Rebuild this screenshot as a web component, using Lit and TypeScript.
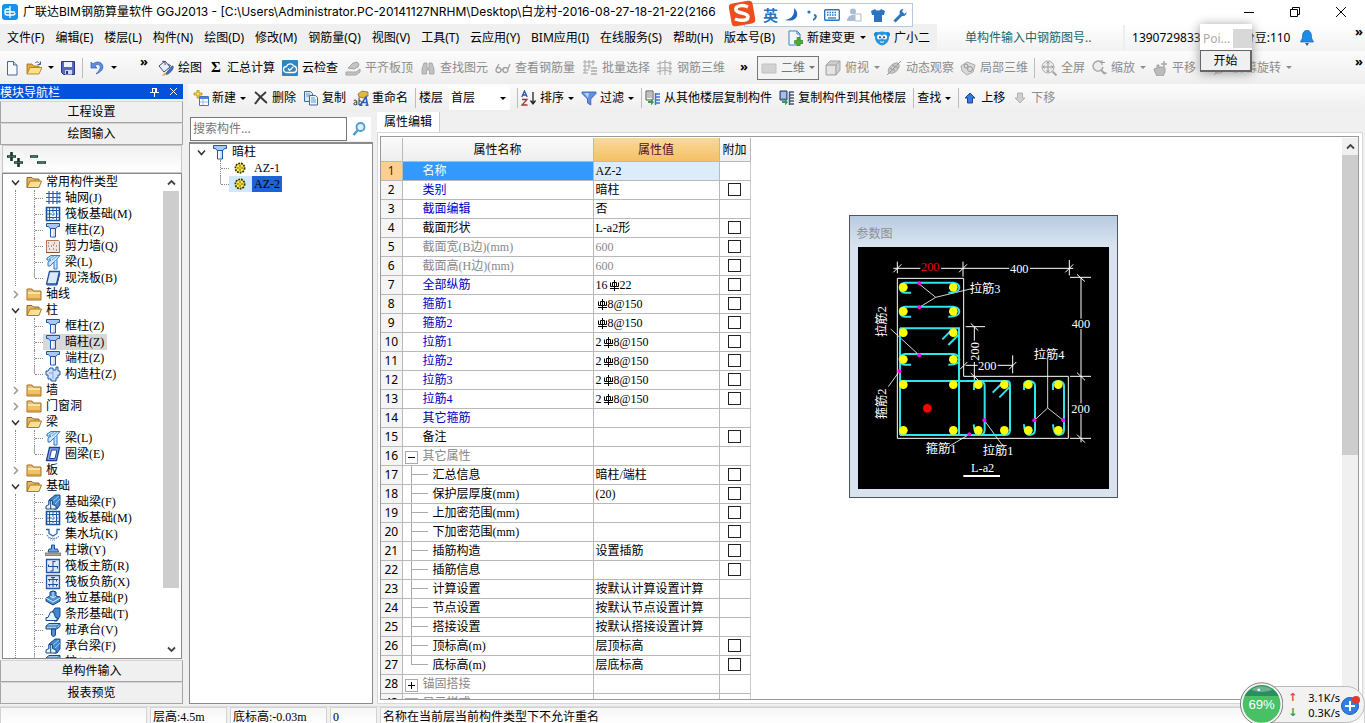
import { LitElement, html, svg, css, nothing, type TemplateResult } from "lit";
import { customElement, state } from "lit/decorators.js";
import { classMap } from "lit/directives/class-map.js";

const glyphs: Record<string, TemplateResult> = {
  app: svg`<rect width="16" height="16" rx="3" fill="#1592ea"/><path d="M8 2v12M8 5H5a2 2 0 0 0-2 2v2a2 2 0 0 0 2 2h3M3 8h10M8 11h3a2 2 0 0 0 2-2" stroke="#fff" stroke-width="1.3" fill="none"/>`,
  newfile: svg`<path d="M3.500 1.500h6l3.500 3.500v10h-9.500z" fill="#f7faff" stroke="#4c678f"/><path d="M9.500 1.500V5H13" fill="#cfdcf0" stroke="#4c678f"/>`,
  open: svg`<path d="M1 14V4h5l1.500 2H13v2" fill="#e8a93c" stroke="#9a6b17" stroke-width=".8"/><path d="M1 14 4 7.500h12L13 14z" fill="#ffe08a" stroke="#a87717" stroke-width=".8"/><path d="M9 3c2-2 4-1 5 1M14.500 1.500V4.500H11.500" fill="none" stroke="#4a5f88"/>`,
  save: svg`<path d="M1.500 1.500h13v13h-11l-2-2z" fill="#5567c4" stroke="#2c3784"/><path d="M4 2h8v5H4z" fill="#eef1fb"/><path d="M5 10h7v4.500H5z" fill="#d4d8ea"/><path d="M6 11h2v3H6z" fill="#2c3784"/>`,
  undo: svg`<path d="M2 2v6h6L5.800 5.800C9 3 13 5.500 10.500 9.500 9.800 11 8.500 12.500 7 14c5-2 8-5 6.500-9C12 1.500 7.500 1 4 4z" fill="#5b8fe8" stroke="#2b58b5" stroke-width=".7"/>`,
  bucket: svg`<path d="M1 6 7 1l5 6-6 5z" fill="#e9eef8" stroke="#3c4c70"/><path d="M4 2c1-2 4 0 3 3M10 4l3 2" fill="none" stroke="#3c4c70"/><path d="M15 6c1 3-2 6-5 8-2 1-3 0-1-2l5-6z" fill="#3f6fc4" stroke="#27427e" stroke-width=".6"/><path d="M6 13c2-1 3 1 1 2.500L4 16z" fill="#e3b23e"/>`,
  cloud: svg`<rect width="16" height="16" rx="1" fill="#2f86c1"/><path d="M4.500 12.500a3 3 0 0 1 0-6A4 4 0 0 1 11.800 6 3.300 3.300 0 0 1 12 12.500z" fill="none" stroke="#fff" stroke-width="1.300"/><path d="m6 8.500 1.700 1.800L11 7" stroke="#fff" fill="none" stroke-width="1.200"/>`,
  slab: svg`<path d="M1 12h10l4-3v3l-4 3H1zM3 8l5-5 4-1 2 2-1 3-4 2z" fill="#c4c4c4" stroke="#a4a4a4"/>`,
  binoc: svg`<path d="M2 9 4 3h3v5h2V3h3l2 6v5H9.500v-4h-3v4H2z" fill="#c2c2c2" stroke="#9e9e9e" stroke-width=".8"/>`,
  glasses: svg`<path d="M6 10a2.500 2.500 0 1 1-5 0 2.500 2.500 0 0 1 5 0zM13 10a2.500 2.500 0 1 1-5 0 2.500 2.500 0 0 1 5 0zM6 9.500h2M1 9l3-5M13 9l2-5" fill="none" stroke="#a2a2a2" stroke-width="1.300"/>`,
  batch: svg`<path d="M1 2h12M1 6h8M1 10h6M3 0v13M7 0v9M11 0v5M1 13h5" stroke="#a8a8a8" fill="none"/><path d="M9 7h6v2H9zM9 10h6v2H9zM9 13h6v2H9z" fill="#bdbdbd"/>`,
  rebar3d: svg`<path d="M3 1v14M8 0v15M13 1v14M0 4l8-2 7 2M0 12l8-2 7 2M0 8h15" stroke="#a8a8a8" fill="none"/>`,
  flat: svg`<path d="M1 4h14v9H1z" fill="#d2d2d2" stroke="#c0c0c0"/>`,
  cube: svg`<path d="M1 5l4-4h10v9l-4 5H1z" fill="#cfcfcf" stroke="#a5a5a5"/><path d="M1 5h10v10M11 5l4-4" fill="none" stroke="#a5a5a5"/><path d="M2 6h8v8H2z" fill="#e4e4e4"/>`,
  orbit: svg`<path d="M3 13c-3-4 4-11 9-10 4 4-3 12-9 10z" fill="#c9c9c9" stroke="#a3a3a3"/><path d="M1 15 15 1M6 5l6 3M4 8l5 3" stroke="#989898"/>`,
  local3d: svg`<path d="M1 6 7 2l8 3-2 7-6 3-5-4z" fill="#dadada" stroke="#aaa"/><circle cx="6" cy="6" r="2" fill="none" stroke="#999"/><circle cx="10" cy="9" r="2.500" fill="none" stroke="#999"/>`,
  full: svg`<circle cx="7" cy="7" r="6" fill="#ececec" stroke="#a6a6a6"/><path d="M7 2v10M2 7h10M5.500 3.500 7 2l1.500 1.500M5.500 10.500 7 12l1.500-1.500M3.500 5.500 2 7l1.500 1.500M10.500 5.500 12 7l-1.500 1.500" fill="none" stroke="#999"/><path d="m11.500 11.500 4 4" stroke="#a6a6a6" stroke-width="2"/>`,
  zoom: svg`<path d="M10 2a5 5 0 1 0 2 5" fill="#ececec" stroke="#a6a6a6" stroke-width="1.400"/><path d="m10 10 4 4" stroke="#a6a6a6" stroke-width="2"/><path d="M11 0v5M9 2.500h5M12 13h4" stroke="#999"/>`,
  hand: svg`<path d="M2 10c0-2 2-2 3-1V5h2v3l1-1h2l3 1v4l-2 4H5z" fill="#bcbcbc" stroke="#a0a0a0"/><path d="M12 1v6M9 4h6" stroke="#a8a8a8" stroke-width="1.500"/>`,
  create: svg`<path d="M6.500 6.500h9v9h-9z" fill="#fff" stroke="#4576bf"/><path d="M7 7h8v2H7z" fill="#4d86d8"/><path d="M7 12h8M10 9v6" stroke="#9db9e4"/><path d="M4 0h2v3h3v2H6v3H4V5H1V3h3z" fill="#ffdf4a" stroke="#a07d13" stroke-width=".7"/>`,
  del: svg`<path d="M2 2c4 3 8 8 12 11M13 2C9 5 5 9 2 14" stroke="#3a3a3a" stroke-width="2" fill="none"/>`,
  copy: svg`<path d="M1.500 1.500h6l2 2v8h-8z" fill="#dbe8fc" stroke="#41699f"/><path d="M6.500 5.500h6l2 2v7.500h-8z" fill="#eef4ff" stroke="#41699f"/><path d="M3 4h4M3 6h3M8 8h4M8 10h5M8 12h5" stroke="#6b96d8"/>`,
  rename: svg`<path d="M5 4 9 1l6 1v4l-4 2-5-1z" fill="#e2b93f" stroke="#7a6220" stroke-width=".7"/><path d="M.8 10.500c2-1 3 0 3 1.200v3.300M3.800 12C1.500 12 .8 13 .8 14c.3 1.300 2.300 1.200 3 0M6 7.500V15M6 11c3-1.500 3.500 4 0 3.800" fill="none" stroke="#333"/><path d="M7.500 15 13 7l1.500 8M10 12.500h4M6.500 15.200h3M12.500 15.200h3" fill="none" stroke="#2a5cc0" stroke-width="1.500"/>`,
  sort: svg`<path d="M.8 7 3.500 1 6.200 7M1.800 5h3.500" fill="none" stroke="#2d50b4" stroke-width="1.300"/><path d="M1 9.500h5L1 15h5.500" fill="none" stroke="#a33" stroke-width="1.300"/><path d="M12 2v12M9.500 10.500 12 14l2.500-3.500" fill="none" stroke="#222" stroke-width="1.300"/>`,
  filter: svg`<path d="M1 2h14v1.500L9.800 9v6L6.500 13V9L1 3.500z" fill="#5f92e4" stroke="#2c57a8" stroke-width=".8"/><path d="M3 3h5l-1 5z" fill="#b6d0fa"/>`,
  fromfloor: svg`<path d="M1 1h7v9H1z" fill="#f4f4f4" stroke="#555"/><path d="M2 3h5M2 5h5M2 7h5" stroke="#888"/><path d="M10 4h5M10 7h5M10 10h5M10 13h5M10.500 3v12" stroke="#3f74cf" stroke-width="1.500"/><path d="M3 11v2h3v2.500l3-3.500-3-3v2z" fill="#35a043"/>`,
  tofloor: svg`<path d="M1 1h7v9H1z" fill="#6e94d8" stroke="#345"/><path d="M2 3h5M2 5h5M2 7h5" stroke="#dfe9fb"/><path d="M10 2h5M10 5h5M10 8h5M10 11h5M10 14h5M10.500 2v13" stroke="#44597d" stroke-width="1.500"/><path d="M3 11v2h3v2.500l3-3.500-3-3v2z" fill="#35a043"/>`,
  up: svg`<path d="M8 3 13 8h-2.500v5h-5V8H3z" fill="#3976e0" stroke="#1d468f"/>`,
  down: svg`<path d="M8 13 13 8h-2.500V3h-5v5H3z" fill="#cfcfcf" stroke="#b2b2b2"/>`,
  change: svg`<path d="M2 1h8l3 3v11H2z" fill="#f3f8ff" stroke="#3b86c7"/><path d="M10 1v3h3" fill="none" stroke="#3b86c7"/><path d="M10 7.500h3v3h3v3h-3V16h-3v-2.500H7.500v-3H10z" fill="#4caf2e" stroke="#2b7b18" stroke-width=".6"/>`,
  robot: svg`<circle cx="2.500" cy="4.500" r="2.500" fill="#1a7ec8"/><circle cx="13.500" cy="4.500" r="2.500" fill="#1a7ec8"/><path d="M8 1.500c5 0 7 3 7 6 0 4-3 7-7 8-4-1-7-4-7-8 0-3 2-6 7-6z" fill="#2596dd"/><circle cx="5.500" cy="7" r="2.500" fill="#fff"/><circle cx="10.500" cy="7" r="2.500" fill="#fff"/><circle cx="6" cy="7.300" r="1.100" fill="#124d83"/><circle cx="10" cy="7.300" r="1.100" fill="#124d83"/><path d="M6 11.500c1 1 3 1 4 0" stroke="#fff" fill="none"/>`,
  bell: svg`<path d="M8 0c4 1 4.500 4 4.500 7 0 2 1.500 3 2 5h-13c.5-2 2-3 2-5 0-3 .5-6 4.500-7z" fill="#1c8bea" stroke="#1669b8" stroke-width=".7"/><path d="M6 13h4l-2 3z" fill="#1669b8"/>`,
  search: svg`<circle cx="9.500" cy="6" r="4" fill="#dff0fc" stroke="#4c9bd3" stroke-width="1.800"/><path d="m6.500 9.500-4 4.500" stroke="#4c9bd3" stroke-width="2.500"/>`,
  folderOpen: svg`<path d="M1 13.500V3.500h5l1.500 1.500H13v3" fill="#e9b758" stroke="#8e6420"/><path d="M1 13.500 4 7h11.500L13 13.500z" fill="#fbdf95" stroke="#a97b2b"/>`,
  folder: svg`<path d="M1 3h5l1.500 2H15v9H1z" fill="#f0c266" stroke="#9b7130"/><path d="M2 6h12v2H2z" fill="#fbe3a3"/><path d="M2 12h12v1.500H2z" fill="#d79c3c"/>`,
  grid: svg`<path d="M4 1v13M8 1v13M12 1v13M1 3.500h13M1 7.500h13M1 11.500h13" stroke="#2a60b4" stroke-width="1.200"/><circle cx="14.500" cy="3.500" r="1.200" fill="#2a60b4"/><circle cx="14.500" cy="7.500" r="1.200" fill="#2a60b4"/><circle cx="14.500" cy="11.500" r="1.200" fill="#2a60b4"/>`,
  raft: svg`<path d="M1.500 1.500h13v13h-13z" fill="#fff" stroke="#184f9f" stroke-width="1.600"/><path d="M4.500 4.500h7v7h-7z" fill="none" stroke="#184f9f" stroke-width="1.200"/><path d="M8 2v12M2 8h12" stroke="#2c68bd" stroke-dasharray="2 1"/><path d="M4.500 2v2.500M11.500 2v2.500M4.500 11.500V14M11.500 11.500V14M2 4.500h2.500M2 11.500h2.500M11.500 4.500H14M11.500 11.500H14" stroke="#2c68bd"/>`,
  column: svg`<path d="M1.500 1.500h13v3h-2l-1.500 2H5l-1.500-2h-2z" fill="#a9c8f4" stroke="#1d57a8"/><path d="M5.500 6.500h5v8.500h-5z" fill="#cfe0fa" stroke="#1d57a8"/><path d="M7 7v7.500" stroke="#fff" stroke-width="1.500"/>`,
  wall: svg`<path d="M1.500 2.500h12l1 1v11h-13z" fill="#f3e4dc" stroke="#b57552"/><path d="M3 5h1M6 8h1M4 11h1M9 5h1M11 8h1M8 11h1M11 12h1M3 8h1M8 7h1" stroke="#555" stroke-width="1.200"/><path d="M1 14.500h13.500" stroke="#8d5233"/>`,
  beam: svg`<path d="M2 4 6 1.500h9L12 5v10H9V8L5 12H3V8l3-2H2z" fill="#cfe5fb" stroke="#2f78bf"/><path d="M4 5 9 2M7 6l5-4M9 8l4-4" stroke="#56a0dc"/>`,
  cast: svg`<path d="M4.500 1.500h10l-3 12.500h-10z" fill="#dce9fc" stroke="#1c4f9e" stroke-width="1.300"/><path d="M2 15h10l3-12" fill="none" stroke="#1c4f9e"/>`,
  ring: svg`<path d="M4.500 1.500h10l-3 13h-10z" fill="#8bb1ea" stroke="#1c4098" stroke-width="1.300"/><path d="M6.500 4h5.500l-2 8.500H4.500z" fill="#fff" stroke="#1c4098"/>`,
  cross: svg`<path d="M5 2h3v2h3V1h2v4h2v4h-2v3h-2v3H6v-2H3V9H1V5h2z" fill="#cfe0fa" stroke="#1d57a8"/><path d="M8 4v9M4 7h4" stroke="#7da5e2"/>`,
  found: svg`<path d="M4 11V6l6-5h5v10l-3 4H9z" fill="#3f87cf" stroke="#174a88"/><path d="m8 7 6-5M10 10l5-5" stroke="#9bcaf5"/><path d="M1 15v-3l3-1.500V6.500h3.500v4L11 12v3z" fill="#e6f1fd" stroke="#174a88"/><path d="M5.700 7v8" stroke="#174a88"/>`,
  pit: svg`<path d="M1 3.500h3v4l4 2.500 4-2.500v-4h3" fill="none" stroke="#2a69b4" stroke-width="1.300"/><path d="M2 9c1 4 11 6 12 0" fill="none" stroke="#2a69b4" stroke-dasharray="1.500 1"/><path d="M3 12h10M5 14h6" stroke="#6da2dd" stroke-dasharray="1 1"/>`,
  pier: svg`<path d="M6.500 3h3v4h3l1 3H3l1-3h2.500z" fill="#6ea8e6" stroke="#1d4f98"/><path d="M0 11h16v2.500H0z" fill="#b0a79a" stroke="#6b6256" stroke-width=".7"/>`,
  bars: svg`<path d="M1.500 1.500h13v13h-13z" fill="#dfeafb" stroke="#2459a5" stroke-width="1.300"/><path d="M8 3v10M3 8.500h10M8 3.500h2.500M5.500 13H8M3.500 6.500v2M12.500 8.500v2" fill="none" stroke="#1f4c92"/>`,
  negbars: svg`<path d="M1.500 1.500h13v13h-13z" fill="#dfeafb" stroke="#2459a5" stroke-width="1.300"/><path d="M8 3v10M3 5.500h10M3 10.500h10M4.500 5.500v2M11.500 5.500v2M4.500 10.500v2M11.500 10.500v2M6 3.500h4" stroke="#1f4c92"/>`,
  isolated: svg`<path d="M1 8l4-2V2l3-1 3 1v4l4 1v4l-7 4-7-4z" fill="#4b91d9" stroke="#133f78"/><path d="M1 8l7 4 7-4M5 6l3 2 3-2M8 2v6" fill="none" stroke="#dcecfc"/>`,
  strip: svg`<path d="M5 9l5-7h5v8l-3 5H9z" fill="#3f87cf" stroke="#174a88"/><path d="M1 14.500v-3h2L5.500 6h3l2 5.500H12v3z" fill="#e9f3fe" stroke="#174a88"/>`,
  pilecap: svg`<path d="M1 4l3-2.500h11v3L12 7H1z" fill="#9cc5f1" stroke="#174a88"/><path d="M1 4h11l3-2.500M12 4v3" fill="none" stroke="#174a88" stroke-width=".7"/><path d="M6.500 7h4v6L8.500 15l-2-2z" fill="#4b91d9" stroke="#174a88"/>`,
  gear: svg`<circle cx="8" cy="8" r="4.500" fill="#ffee3a" stroke="#3a3300" stroke-width="2" stroke-dasharray="1.800 .9"/><circle cx="8" cy="8" r="3.500" fill="#ffee3a"/><path d="M8 5v6M5 8h6" stroke="#333" stroke-width=".8"/><circle cx="8" cy="8" r="1" fill="#ffee3a"/>`,
};
const icon = (n: string, s = 16) =>
  html`<svg class="ic" width=${s} height=${s} viewBox="0 0 16 16" aria-hidden="true">${glyphs[n]}</svg>`;
const caret = html`<i class="caret"></i>`;

type Tool = { i?: string; t?: string; off?: boolean; drop?: boolean; sep?: boolean };

const menus = ["文件(F)", "编辑(E)", "楼层(L)", "构件(N)", "绘图(D)", "修改(M)", "钢筋量(Q)", "视图(V)", "工具(T)", "云应用(Y)", "BIM应用(I)", "在线服务(S)", "帮助(H)", "版本号(B)"];

const drawTools: Tool[] = [
  { i: "slab", t: "平齐板顶", off: true },
  { i: "binoc", t: "查找图元", off: true },
  { i: "glasses", t: "查看钢筋量", off: true },
  { i: "batch", t: "批量选择", off: true },
  { i: "rebar3d", t: "钢筋三维", off: true },
];
const viewTools: Tool[] = [
  { i: "cube", t: "俯视", off: true, drop: true },
  { i: "orbit", t: "动态观察", off: true },
  { i: "local3d", t: "局部三维", off: true },
  { sep: true },
  { i: "full", t: "全屏", off: true },
  { i: "zoom", t: "缩放", off: true, drop: true },
  { i: "hand", t: "平移", off: true, drop: true },
  { i: "orbit", t: "屏幕旋转", off: true, drop: true },
];

type Node = { t: string; i: string; sel?: boolean };
const tree: { t: string; open?: boolean; kids?: Node[] }[] = [
  { t: "常用构件类型", open: true, kids: [
    { t: "轴网(J)", i: "grid" }, { t: "筏板基础(M)", i: "raft" }, { t: "框柱(Z)", i: "column" },
    { t: "剪力墙(Q)", i: "wall" }, { t: "梁(L)", i: "beam" }, { t: "现浇板(B)", i: "cast" } ] },
  { t: "轴线" },
  { t: "柱", open: true, kids: [
    { t: "框柱(Z)", i: "column" }, { t: "暗柱(Z)", i: "column", sel: true },
    { t: "端柱(Z)", i: "column" }, { t: "构造柱(Z)", i: "cross" } ] },
  { t: "墙" },
  { t: "门窗洞" },
  { t: "梁", open: true, kids: [{ t: "梁(L)", i: "beam" }, { t: "圈梁(E)", i: "ring" }] },
  { t: "板" },
  { t: "基础", open: true, kids: [
    { t: "基础梁(F)", i: "found" }, { t: "筏板基础(M)", i: "raft" }, { t: "集水坑(K)", i: "pit" },
    { t: "柱墩(Y)", i: "pier" }, { t: "筏板主筋(R)", i: "bars" }, { t: "筏板负筋(X)", i: "negbars" },
    { t: "独立基础(P)", i: "isolated" }, { t: "条形基础(T)", i: "strip" }, { t: "桩承台(V)", i: "pilecap" },
    { t: "承台梁(F)", i: "found" }, { t: "桩(U)", i: "pilecap" } ] },
];

/* k: b = blue, g = grey, c = child of a group, m / p = open / closed group. # stands for the rebar grade sign. */
type Row = { n: number; t: string; v?: string; k?: string; box?: boolean };
const rows: Row[] = [
  { n: 1, t: "名称", v: "AZ-2", k: "b" },
  { n: 2, t: "类别", v: "暗柱", k: "b", box: true },
  { n: 3, t: "截面编辑", v: "否", k: "b" },
  { n: 4, t: "截面形状", v: "L-a2形", box: true },
  { n: 5, t: "截面宽(B边)(mm)", v: "600", k: "g", box: true },
  { n: 6, t: "截面高(H边)(mm)", v: "600", k: "g", box: true },
  { n: 7, t: "全部纵筋", v: "16#22", k: "b", box: true },
  { n: 8, t: "箍筋1", v: "#8@150", k: "b", box: true },
  { n: 9, t: "箍筋2", v: "#8@150", k: "b", box: true },
  { n: 10, t: "拉筋1", v: "2#8@150", k: "b", box: true },
  { n: 11, t: "拉筋2", v: "2#8@150", k: "b", box: true },
  { n: 12, t: "拉筋3", v: "2#8@150", k: "b", box: true },
  { n: 13, t: "拉筋4", v: "2#8@150", k: "b", box: true },
  { n: 14, t: "其它箍筋", k: "b" },
  { n: 15, t: "备注", box: true },
  { n: 16, t: "其它属性", k: "m" },
  { n: 17, t: "汇总信息", v: "暗柱/端柱", k: "c", box: true },
  { n: 18, t: "保护层厚度(mm)", v: "(20)", k: "c", box: true },
  { n: 19, t: "上加密范围(mm)", k: "c", box: true },
  { n: 20, t: "下加密范围(mm)", k: "c", box: true },
  { n: 21, t: "插筋构造", v: "设置插筋", k: "c", box: true },
  { n: 22, t: "插筋信息", k: "c", box: true },
  { n: 23, t: "计算设置", v: "按默认计算设置计算", k: "c" },
  { n: 24, t: "节点设置", v: "按默认节点设置计算", k: "c" },
  { n: 25, t: "搭接设置", v: "按默认搭接设置计算", k: "c" },
  { n: 26, t: "顶标高(m)", v: "层顶标高", k: "c", box: true },
  { n: 27, t: "底标高(m)", v: "层底标高", k: "c last", box: true },
  { n: 28, t: "锚固搭接", k: "p" },
  { n: 43, t: "显示样式", k: "p" },
];

const rebar = html`<svg class="rebar" width="12" height="11" viewBox="0 0 12 11" role="img" aria-label="三级钢"><path d="M4.500 2.500h4v4h-4zM6.500 0v11M2.500 2.500v4h2M10.500 2.500v4h-2M2 8.500h9" fill="none" stroke="currentColor"/></svg>`;
const value = (v = "") => {
  const [a, b] = v.split("#");
  return b === undefined ? a : html`${a}${rebar}${b}`;
};

const bars: [number, number][] = [
  [175, 232], [325, 232], [175, 304], [325, 304], [175, 368], [325, 368], [175, 448], [325, 448],
  [175, 524], [325, 524], [175, 661], [325, 661], [400, 524], [478, 524], [550, 524], [640, 524],
  [400, 661], [478, 661], [550, 661], [640, 661],
];
const marks: [number, number][] = [[223, 220], [223, 292], [223, 436], [163, 484], [373, 673], [418, 631], [568, 631], [655, 631]];

const drawing = html`<svg class="drawing" width="251" height="242" viewBox="39 111 753 726" role="img" aria-label="L-a2">
  <rect x="39" y="111" width="753" height="726" fill="#000"/>
  <g fill="none" stroke="#fff" stroke-width="3">
    <path d="M157 205H356V499H670V685H157Z"/>
    <path d="M157 155V190M354 155V200M673 150V196M145 175H226M288 175H493M555 175H685M145 187 169 163M342 187 366 163M661 187 685 163"/>
    <path d="M675 202H738M675 499H738M675 685H738M708 202V326M708 357V580M708 612V697M696 193 720 215M696 488 720 511M696 674 720 698"/>
    <path d="M362 350H420M388 350V392M388 456V511M377 340 400 362M362 466H398M458 466H503M503 436V490M345 478 367 456M492 478 514 456M377 489 400 511"/>
    <path d="M223 222 272 262 223 292M272 262 380 236M137 357 223 436M130 530 163 484M373 673 312 709M418 631 470 703M608 450V594L568 631M608 594 655 631" stroke-width="2.500"/>
    <path d="M355 798H465" stroke-width="6"/>
  </g>
  <g fill="none" stroke="#2ee6ea" stroke-width="6">
    <path d="M198 248H178Q164 246 164 232 164 220 180 218H325Q343 220 343 234 342 248 310 248"/>
    <path d="M198 320H178Q164 318 164 304 164 292 180 290H325Q343 292 343 306 342 320 310 320"/>
    <path d="M198 464H178Q164 462 164 448 164 434 180 432H325Q343 434 343 450 342 464 310 464"/>
    <path d="M165 355H342V675M165 355V675M292 388 318 362M310 405 340 375"/>
    <path d="M165 513H487Q495 514 495 524V662Q494 675 480 675H165M443 548 472 519M463 562 495 530"/>
    <path d="M387 540V522Q390 513 402 513 419 514 419 528V660Q418 675 402 675 388 673 386 643"/>
    <path d="M537 540V522Q540 513 552 513 570 514 570 528V660Q569 675 552 675 538 673 537 643"/>
    <path d="M624 540V522Q627 513 640 513 657 514 657 528V660Q656 675 640 675 626 673 624 643"/>
  </g>
  ${bars.map(([x, y]) => svg`<circle cx=${x} cy=${y} r="13" fill="#ffff00"/>`)}
  <circle cx="247" cy="595" r="13" fill="#f00"/>
  ${marks.map(([x, y]) => svg`<circle cx=${x} cy=${y} r="6" fill="#f0f"/>`)}
  <g class="dim" fill="#fff" font-size="37">
    <text x="228" y="183" fill="#e01010">200</text><text x="495" y="188">400</text>
    <text x="680" y="353">400</text><text x="679" y="609">200</text><text x="399" y="480">200</text>
    <text transform="translate(401 452) rotate(-90)">200</text>
    <text x="374" y="248">拉筋3</text><text x="566" y="446">拉筋4</text>
    <text x="413" y="734">拉筋1</text><text x="242" y="728">箍筋1</text>
    <text transform="translate(122 381) rotate(-90)">拉筋2</text>
    <text transform="translate(122 628) rotate(-90)">箍筋2</text>
    <text x="378" y="785">L-a2</text>
  </g>
</svg>`;

@customElement("app-root")
export class AppRoot extends LitElement {
  @state() private current = 1;

  static styles = css`
    :host {
      --ui: "Noto Sans", "Noto Sans CJK SC", sans-serif;
      --song: "Liberation Serif", "Noto Sans CJK SC", serif;
      display: grid; grid-template-rows: 24px 27px 33px minmax(0, 1fr) 17px;
      height: 100vh; overflow: hidden; position: relative;
      background: #f0f0f0; color: #000; font: 12px/16px var(--ui); white-space: nowrap;
    }
    * { box-sizing: border-box; }
    button, input { font: inherit; color: inherit; margin: 0; }
    button { background: none; border: 0; padding: 0; }
    ul { list-style: none; margin: 0; padding: 0; }
    .ic { flex: none; display: block; }
    .caret { flex: none; width: 0; height: 0; border: 3px solid transparent; border-top: 3px solid currentColor; border-bottom: 0; }
    .title { display: flex; align-items: center; gap: 5px; padding-left: 2px; background: #fff; }
    .title h1 { font: 12px/16px "Inter", "Noto Sans CJK SC", sans-serif; margin: 0; flex: 1; }
    .winbtns { display: flex; gap: 34px; padding-right: 18px; }
    .winbtns button { display: flex; width: 12px; }
    .menu { display: flex; align-items: center; background: #f0f0f0; }
    .menu nav { display: flex; gap: 11px; padding-left: 7px; }
    .menu .tool { margin-left: 8px; }
    .menu nav + .tool { margin-left: 12px; }
    .account { flex: 1; display: flex; align-items: center; align-self: stretch; margin-left: 7px; background: linear-gradient(#fff, #f2f2f2); }
    .news { width: 188px; padding-left: 28px; border-right: 2px solid #eee; color: #1c6468; line-height: 26px; }
    .user { flex: 1; padding-left: 7px; display: flex; align-items: center; gap: 9px; }
    .user .coins { margin-left: 33px; }
    .more { font-size: 13px; font-weight: bold; align-self: flex-start; line-height: 14px; padding: 0 2px 0 0; }
    .bar .more { padding-top: 3px; }
    .bar { display: flex; align-items: center; background: linear-gradient(#fcfcfc, #eee); }
    .tool { display: flex; align-items: center; gap: 4px; height: 24px; }
    .tool.off { color: #8c8c8c; }
    .tool .caret { margin-left: 1px; }
    .sep { flex: none; width: 1px; height: 20px; background: #bcbcbc; }
    .files { display: flex; align-items: center; gap: 6px; width: 140px; padding-left: 4px; }
    .files .tool { gap: 5px; }
    .draw { display: flex; gap: 7px; width: 607px; padding-left: 8px; align-items: center; }
    .draw .more { margin-left: 8px; }
    .sigma { font: bold 15px "Liberation Serif", serif; width: 14px; }
    .mode { display: flex; align-items: center; gap: 4px; width: 62px; height: 24px; border: 1px solid #777; padding: 0 3px; color: #777; background: #f4f4f4; }
    .view { flex: 1; display: flex; gap: 6px; padding-left: 6px; align-items: center; overflow: hidden; }
    .body { display: grid; grid-template: minmax(0, 1fr) / 183px minmax(0, 1fr); gap: 5px; min-height: 0; }
    .side { display: flex; flex-direction: column; min-height: 0; padding-bottom: 2px; font-family: var(--song); }
    .side header { flex: none; display: flex; align-items: center; gap: 10px; height: 15px; margin-bottom: 2px; padding-right: 5px; background: #0451de; color: #fff; }
    .side h2 { flex: 1; margin: 0; font: 12px/15px "Noto Sans CJK SC", sans-serif; }
    .side header button { display: flex; }
    .section { flex: none; height: 22px; border: 1px solid #a5a5a5; border-top-color: #d5d5d5; background: #f0f0f0; text-align: center; }
    .expand { flex: none; display: flex; gap: 7px; height: 28px; padding: 6px 4px; margin: 0 1px 0 2px; border: 1px solid #c8c8c8; background: linear-gradient(#f0f0f0, #fff); }
    .treebox { flex: 1; min-height: 0; display: flex; margin: 0 1px 1px 2px; border: 1px solid #8a8a8a; background: #fff; overflow: hidden; }
    .tree { flex: 1; padding: 0 0 0 6px; min-width: 0; }
    .branch { display: flex; align-items: center; gap: 4px; height: 16px; }
    .branch .ic { margin-left: 1px; }
    .chev { width: 12px; height: 16px; display: flex; align-items: center; justify-content: center; }
    .kids { margin-left: 6px; padding-left: 18px; border-left: 1px dotted #888; }
    .leaf { display: flex; align-items: center; height: 16px; border-left: 1px dotted #888; }
    .leaf:last-child { border-left: 0; padding-left: 1px; background: linear-gradient(#aaa, #aaa) 0 0 / 1px 8px no-repeat; }
    .leaf::before { content: ""; width: 8px; border-top: 1px dotted #888; }
    .leaf span { display: flex; align-items: center; gap: 4px; height: 16px; padding: 0 3px 0 2px; }
    .leaf .sel { background: #d8d8d8; }
    .scroll { flex: none; width: 16px; display: flex; flex-direction: column; background: #f0f0f0; }
    .scroll i { height: 17px; display: flex; align-items: center; justify-content: center; }
    .thumb { background: #cdcdcd; }
    .side .scroll { background: #fff; margin-right: 2px; }
    .side .thumb { flex: 399; } .side .rest { flex: 53; }
    .main { display: grid; grid-template-rows: 28px minmax(0, 1fr); min-width: 0; }
    .edit { gap: 7px; padding-left: 5px; }
    .edit .tool { gap: 3px; }
    .edit .sep { margin-right: -4px; }
    .floor { display: flex; align-items: center; gap: 6px; }
    .floor select { appearance: none; width: 51px; height: 24px; border: 0; padding: 0 2px; font: inherit; color: #000; background: none; }
    .pick { display: flex; align-items: center; background: #fff; padding-right: 4px; }
    .work { display: grid; grid-template: minmax(0, 1fr) / 184px minmax(0, 1fr); gap: 4px; min-height: 0; padding: 0 2px 2px 1px; }
    .list { display: flex; flex-direction: column; min-height: 0; padding-top: 5px; }
    .find { flex: none; display: flex; height: 24px; margin-bottom: 1px; padding-left: 1px; }
    .find input { width: 157px; border: 1px solid #777; padding: 0 2px; background: #fff; font-size: 12px; outline: 0; }
    .find input::placeholder { color: #777; opacity: 1; }
    .find button { width: 24px; background: #fff; display: flex; align-items: center; justify-content: center; }
    .items { flex: 1; border: 1px solid #8a8a8a; border-top-width: 2px; background: #fff; padding: 0 0 0 5px; font-family: var(--song); }
    .items .kids { border: 0; padding-left: 19px; }
    .items .leaf span { padding-left: 3px; gap: 6px; }
    .items .sel { background: #cfe8fb; }
    .items .sel b { background: #1c63d4; }
    .items b { font-weight: normal; padding: 0 2px; margin: 0 -3px 0 -2px; }
    .props { display: flex; flex-direction: column; min-width: 0; min-height: 0; }
    .tab { flex: none; align-self: flex-start; height: 20px; padding: 2px 7px; background: #fff; border-right: 1px solid #ccc; }
    .frame { flex: 1; min-height: 0; border: 1px solid #d8d8d8; padding: 3px 3px 3px 2px; background: #fff; }
    .sheet { height: 100%; display: flex; overflow: hidden; border: 1px solid #9a9a9a; padding-top: 1px; background: #fff; }
    table { align-self: flex-start; border-collapse: collapse; table-layout: fixed; width: 369px; font-family: var(--song); }
    th, td { height: 19px; padding: 0; border: 1px solid #b9b9b9; border-left: 0; line-height: 18px; text-align: left; overflow: hidden; }
    thead th { height: 23px; border-top: 0; font: 12px/20px "Noto Sans CJK SC", sans-serif; text-align: center; background: linear-gradient(#fafafa, #eee); }
    thead .hot { background: linear-gradient(#f9d99a, #f4c064); color: #5a0a2a; }
    .num { background: #f5f5f5; text-align: center; font: 12px/18px "Noto Sans", sans-serif; }
    .name { padding-left: 20px; }
    .val { padding-left: 2px; }
    .rebar { vertical-align: -2px; }
    .b .name { color: #0000c0; }
    .g .name, .g .val, .m .name, .p .name { color: #888; }
    .cur .num { background: #fbd08c; color: #7a0a1a; }
    .cur .name { background: #3399ff; color: #fff; }
    .cur .val { background: #dcecfb; }
    .m .name, .p .name { padding-left: 2px; }
    .fold { display: inline-flex; width: 13px; height: 13px; margin-right: 5px; border: 1px solid #aaa; vertical-align: -2px; align-items: center; justify-content: center; color: #000; }
    .c .name { padding: 0 0 0 8px; }
    .stem { display: inline-flex; width: 17px; height: 18px; margin-right: 5px; vertical-align: top; border-left: 1px solid #aaa; align-items: center; }
    .stem::before { content: ""; width: 16px; border-top: 1px solid #aaa; }
    .last .stem { height: 9px; border-bottom: 1px solid #aaa; }
    .last .stem::before { display: none; }
    td.box { text-align: center; border-right-color: #ccc; }
    .box input { appearance: none; display: block; width: 13px; height: 13px; margin: 0 auto; border: 1px solid #222; background: #fff; }
    .canvas { flex: 1; position: relative; min-width: 0; }
    .param { position: absolute; left: 98px; top: 77px; width: 269px; padding: 8px 7px; border: 1px solid #4d5561; background: linear-gradient(#b9cbe0, #d8e3ef 30px); }
    .param h3 { margin: 2px 0 5px; font: 12px/16px var(--ui); color: #8c8f94; }
    .drawing { display: block; margin: 0 auto; }
    .dim { font-family: "Liberation Serif", "Noto Sans CJK SC", serif; }
    .sheet .thumb { flex: 302; } .sheet .rest { flex: 228; }
    .status { display: flex; gap: 3px; border-top: 1px solid #ddd; font-family: var(--song); overflow: hidden; }
    .status span { flex: none; height: 20px; padding: 1px 2px; border: 1px solid #d2d2d2; background: linear-gradient(#f6f6f6, #fff); }
    .s1 { width: 147px; } .s2 { width: 77px; } .s3 { width: 97px; } .s4 { width: 47px; }
    .status .s5 { flex: 1; }
    .ime { position: absolute; left: 728px; top: 0; width: 185px; height: 27px; display: flex; align-items: center; }
    .keys { display: flex; flex: 1; align-items: center; justify-content: space-between; height: 24px; margin: 3px 0 0 -12px; padding: 0 4px 0 18px; border: 1px solid #b6c9de; background: #fff; color: #2b74c0; font: bold 15px/20px "Noto Sans CJK SC", sans-serif; }
    .ime > svg { position: relative; flex: none; }
    .float { position: absolute; left: 1200px; top: 24px; width: 52px; background: #fff; box-shadow: 0 1px 10px #999; color: #aaa; }
    .float header { display: flex; height: 26px; align-items: center; justify-content: space-between; padding: 3px 0 0 3px; }
    .float header i { width: 19px; height: 19px; background: #d8d8d8; }
    .float button { width: 52px; height: 22px; background: #f0f0f0; border: 1px solid #666; border-right-width: 2px; border-bottom-width: 2px; color: #000; }
    .speed { position: absolute; right: 0; bottom: 0; width: 126px; height: 43px; display: flex; align-items: flex-end; }
    .pill { flex: 1; height: 37px; display: flex; align-items: center; justify-content: space-between; margin-left: -24px; padding: 0 0 0 28px; border: 1px solid #bbb; border-radius: 0 20px 20px 0; background: #f2f2f2; font: 11px/15px "Noto Sans", sans-serif; }
    .pill div { display: grid; grid-template-columns: 20px auto; }
    .red { color: #d94a3a; } .green { color: #2c9b55; }
    .red, .green { font-family: "DejaVu Sans", sans-serif; font-weight: bold; }
    .ball { position: relative; display: block; margin-bottom: -4px; }
  `;

  private tool(x: Tool) {
    if (x.sep) return html`<span class="sep"></span>`;
    return html`<button class=${classMap({ tool: true, off: !!x.off })}>${x.i ? icon(x.i) : nothing}${x.t}${x.drop ? caret : nothing}</button>`;
  }

  private chevron(open: boolean) {
    return html`<svg width="9" height="9" viewBox="0 0 9 9"><path d=${open ? "M1 2.500 4.500 6.500 8 2.500" : "M3 1 6.500 4.500 3 8"} fill="none" stroke=${open ? "#333" : "#999"} stroke-width="1.500"/></svg>`;
  }

  private scroll() {
    const a = (d: string) => html`<i><svg width="9" height="7" viewBox="0 0 9 7"><path d=${d} fill="none" stroke="#444" stroke-width="1.800"/></svg></i>`;
    return html`<div class="scroll">${a("M1 5.500 4.500 2 8 5.500")}<div class="thumb"></div><div class="rest"></div>${a("M1 1.500 4.500 5 8 1.500")}</div>`;
  }

  private row(r: Row) {
    const k = r.k ?? "";
    const group = k === "m" || k === "p";
    return html`<tr class="${k} ${r.n === this.current ? "cur" : ""}" @click=${() => (this.current = r.n)}>
      <td class="num">${r.n}</td>
      <td class="name">${group ? html`<span class="fold"><svg width="9" height="9"><path d=${k === "m" ? "M1 4.500h7" : "M1 4.500h7M4.500 1v7"} stroke="#000"/></svg></span>` : nothing}${k.startsWith("c") ? html`<span class="stem"></span>` : nothing}${r.t}</td>
      <td class="val">${value(r.v)}</td>
      <td class="box">${r.box ? html`<input type="checkbox" aria-label=${r.t} />` : nothing}</td>
    </tr>`;
  }

  render() {
    return html`
      <div class="title">
        ${icon("app")}
        <h1>广联达BIM钢筋算量软件 GGJ2013 - [C:\\Users\\Administrator.PC-20141127NRHM\\Desktop\\白龙村-2016-08-27-18-21-22(2166</h1>
        <div class="winbtns">
          <button aria-label="最小化"><svg width="12" height="12"><path d="M1 6.500h10" stroke="#000"/></svg></button>
          <button aria-label="还原"><svg width="12" height="12"><path d="M1.500 3.500h7v7h-7zM3.500 3.500v-2h7v7h-2" fill="none" stroke="#000"/></svg></button>
          <button aria-label="关闭"><svg width="12" height="12"><path d="m1 1 10 10M11 1 1 11" stroke="#000"/></svg></button>
        </div>
      </div>
      <div class="menu">
        <nav>${menus.map((m) => html`<button>${m}</button>`)}</nav>
        ${this.tool({ i: "change", t: "新建变更", drop: true })}
        ${this.tool({ i: "robot", t: "广小二" })}
        <div class="account">
          <div class="news">单构件输入中钢筋图号..</div>
          <div class="user"><span>1390729833</span><span class="coins">分豆:110</span>${icon("bell")}</div>
          <span class="more">»</span>
        </div>
      </div>
      <div class="bar">
        <div class="files">
          <button class="tool" aria-label="新建工程">${icon("newfile")}</button>
          <button class="tool" aria-label="打开">${icon("open")}${caret}</button>
          <button class="tool" aria-label="保存">${icon("save")}</button>
          <span class="sep"></span>
          <button class="tool" aria-label="撤销">${icon("undo")}${caret}</button>
        </div>
        <span class="more">»</span>
        <div class="draw">
          ${this.tool({ i: "bucket", t: "绘图" })}
          <button class="tool"><span class="sigma">Σ</span>汇总计算</button>
          ${this.tool({ i: "cloud", t: "云检查" })}
          ${drawTools.map((x) => this.tool(x))}
          <span class="more">»</span>
        </div>
        <button class="mode">${icon("flat")}二维${caret}</button>
        <div class="view">${viewTools.map((x) => this.tool(x))}</div>
        <span class="more">»</span>
      </div>
      <div class="body">
        <aside class="side">
          <header>
            <h2>模块导航栏</h2>
            <button aria-label="固定"><svg width="9" height="10"><path d="M2.500 1v4.500M6.500 1v4.500M2 1.500h5M0 5.500h9M4.500 6v4M5.500 1v4" stroke="#fff" fill="none"/></svg></button>
            <button aria-label="关闭"><svg width="9" height="9"><path d="m1 1 7 7M8 1 1 8" stroke="#fff"/></svg></button>
          </header>
          <button class="section">工程设置</button>
          <button class="section">绘图输入</button>
          <div class="expand">
            <svg width="16" height="15"><path d="M0 4.500h9M4.500 0v9M7 10.500h9M11.500 6v9" stroke="#17352d" stroke-width="2.600"/><path d="M1 4.500h7M8 10.500h7" stroke="#3f8c78" stroke-width=".8"/></svg>
            <svg width="16" height="15"><path d="M0 4.500h8M7 10.500h9" stroke="#17352d" stroke-width="2.600"/><path d="M1 4.500h6M8 10.500h7" stroke="#3f8c78" stroke-width=".8"/></svg>
          </div>
          <div class="treebox">
            <ul class="tree">
              ${tree.map((g) => html`<li>
                <div class="branch"><span class="chev">${this.chevron(!!g.open)}</span>${icon(g.open ? "folderOpen" : "folder")}${g.t}</div>
                ${g.kids ? html`<ul class="kids">${g.kids.map((k) => html`<li class="leaf"><span class=${classMap({ sel: !!k.sel })}>${icon(k.i)}${k.t}</span></li>`)}</ul>` : nothing}
              </li>`)}
            </ul>
            ${this.scroll()}
          </div>
          <button class="section">单构件输入</button>
          <button class="section">报表预览</button>
        </aside>
        <main class="main">
          <div class="bar edit">
            ${this.tool({ i: "create", t: "新建", drop: true })}
            ${this.tool({ i: "del", t: "删除" })}
            ${this.tool({ i: "copy", t: "复制" })}
            ${this.tool({ i: "rename", t: "重命名" })}
            <span class="sep"></span>
            <label class="floor">楼层<span class="pick"><select><option>首层</option></select>${caret}</span></label>
            <span class="sep"></span>
            ${this.tool({ i: "sort", t: "排序", drop: true })}
            ${this.tool({ i: "filter", t: "过滤", drop: true })}
            <span class="sep"></span>
            ${this.tool({ i: "fromfloor", t: "从其他楼层复制构件" })}
            ${this.tool({ i: "tofloor", t: "复制构件到其他楼层" })}
            <span class="sep"></span>
            ${this.tool({ t: "查找", drop: true })}
            <span class="sep"></span>
            ${this.tool({ i: "up", t: "上移" })}
            ${this.tool({ i: "down", t: "下移", off: true })}
          </div>
          <div class="work">
            <section class="list">
              <div class="find"><input type="text" placeholder="搜索构件..." aria-label="搜索构件" /><button aria-label="搜索">${icon("search")}</button></div>
              <div class="items">
                <div class="branch"><span class="chev">${this.chevron(true)}</span>${icon("column")}暗柱</div>
                <ul class="kids">
                  <li class="leaf"><span>${icon("gear")}<b>AZ-1</b></span></li>
                  <li class="leaf"><span class="sel">${icon("gear")}<b>AZ-2</b></span></li>
                </ul>
              </div>
            </section>
            <section class="props">
              <div class="tab">属性编辑</div>
              <div class="frame"><div class="sheet">
                <table>
                  <colgroup><col style="width:21px" /><col style="width:191px" /><col style="width:126px" /><col style="width:31px" /></colgroup>
                  <thead><tr><th></th><th>属性名称</th><th class="hot">属性值</th><th>附加</th></tr></thead>
                  <tbody>${rows.map((r) => this.row(r))}</tbody>
                </table>
                <div class="canvas"><div class="param"><h3>参数图</h3>${drawing}</div></div>
                ${this.scroll()}
              </div></div>
            </section>
          </div>
        </main>
      </div>
      <footer class="status">
        <span class="s1"></span><span class="s2">层高:4.5m</span><span class="s3">底标高:-0.03m</span><span class="s4">0</span><span class="s5">名称在当前层当前构件类型下不允许重名</span>
      </footer>

      <div class="ime">
        <svg width="28" height="27" viewBox="0 0 28 27"><rect x="2" y="2" width="24" height="23" rx="4" fill="#ea4f1c" transform="rotate(-10 14 13)"/><path d="M20 7C14 4 7 6 8 10c1 4 12 2 12 7 0 4-8 4-13 2" fill="none" stroke="#fff" stroke-width="3.500"/></svg>
        <div class="keys"><span>英</span>
          <svg width="14" height="14" viewBox="0 0 14 14"><path d="M9 0c7 6 2 15-9 12C7 11 10 6 9 0z" fill="#2367b5"/></svg>
          <svg width="10" height="12" viewBox="0 0 10 12"><circle cx="2" cy="3" r="1.600" fill="#2b74c0"/><path d="M7 6c3 0 2 4-1 5" fill="none" stroke="#2b74c0" stroke-width="2"/></svg>
          <svg width="16" height="12" viewBox="0 0 16 12"><rect x=".7" y=".7" width="14.600" height="10.600" rx="1" fill="#fff" stroke="#2b74c0" stroke-width="1.400"/><path d="M3 3.500h10M3 6h10" stroke="#2b74c0" stroke-width="1.500" stroke-dasharray="1.500 1"/><path d="M4 9h8" stroke="#2b74c0" stroke-width="1.300"/></svg>
          <svg width="15" height="14" viewBox="0 0 15 14"><circle cx="6" cy="3.500" r="3" fill="#a9bcd2"/><path d="M0 13c0-8 12-8 12 0z" fill="#a9bcd2"/><path d="M8 6h6v7H8z" fill="#fff" stroke="#a9bcd2"/></svg>
          <svg width="16" height="14" viewBox="0 0 16 14"><path d="M5 1c1 2 5 2 6 0l4 2-1 4h-2v7H4V7H2L1 3z" fill="#2b74c0"/></svg>
          <svg width="15" height="15" viewBox="0 0 15 15"><path d="m1.500 13.500 7-7" stroke="#2b74c0" stroke-width="3"/><path d="M13.500 4a3.500 3.500 0 1 1-3-3L9 3.500 11.500 6z" fill="#2b74c0"/></svg>
        </div>
      </div>
      <div class="float"><header>Poi...<i></i></header><button>开始</button></div>
      <div class="speed">
        <svg class="ball" width="47" height="47" viewBox="0 0 47 47">
          <circle cx="24" cy="24" r="22.500" fill="#f4f4f4" stroke="#777"/><circle cx="24" cy="24" r="20" fill="#47c163"/>
          <path d="M6 15.500A20 20 0 0 1 42 15.500z" fill="#2b8e62"/><circle cx="21" cy="9" r="1.500" fill="#e8fff0"/><path d="M13 9c5-5 17-5 22 0-6 3-16 3-22 0z" fill="#fff" opacity=".3"/>
          <text x="24" y="29" text-anchor="middle" font-size="14" font-family="Liberation Sans" fill="#fff">69%</text>
        </svg>
        <div class="pill"><div><span class="red">↑</span><span>3.1K/s</span><span class="green">↓</span><span>0.3K/s</span></div>
          <svg width="24" height="24" viewBox="0 0 24 24"><circle cx="10" cy="13" r="8.500" fill="#2f80e0" stroke="#1d5fb4"/><path d="M10 8v10M5 13h10" stroke="#fff" stroke-width="2"/><circle cx="16" cy="7" r="4" fill="#e03a30"/></svg>
        </div>
      </div>`;
  }
}
